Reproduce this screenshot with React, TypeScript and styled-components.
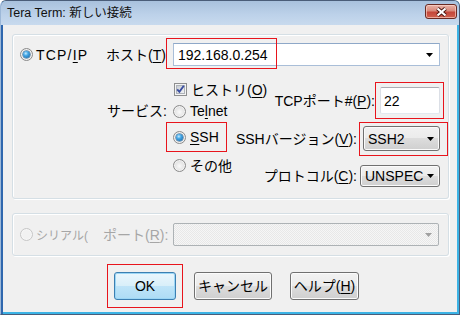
import React from "react";
import styled, { createGlobalStyle, css } from "styled-components";

const GlobalStyle = createGlobalStyle`
  html, body {
    margin: 0;
    padding: 0;
    background: #fff;
  }
  body {
    font-family: "Liberation Sans", "Noto Sans CJK JP", sans-serif;
    font-size: 14px;
    color: #000;
  }
  * {
    box-sizing: border-box;
  }
`;

const Window = styled.div`
  width: 460px;
  height: 315px;
  display: flex;
  flex-direction: column;
  border: 1px solid #4a5d79;
  border-left-color: #9db8d8;
  border-radius: 6px 6px 0 0;
  background: linear-gradient(90deg, #2f67ae 0, #2f67ae 2px, #3cb3e5 2px);
  overflow: hidden;
`;

const TitleBar = styled.div`
  height: 24px;
  flex: none;
  display: flex;
  align-items: flex-start;
  padding: 0 2px 0 6px;
  background: linear-gradient(#a8c1dd, #bcd1e9 55%, #c8daee);
`;

const Title = styled.div`
  flex: 1;
  font-size: 12.5px;
  line-height: 24px;
  color: #111;
  white-space: nowrap;
`;

const CloseButton = styled.div`
  width: 32px;
  height: 15px;
  margin-top: 3px;
  border: 1px solid #6a2a22;
  border-radius: 3px;
  display: flex;
  align-items: center;
  justify-content: center;
  background: linear-gradient(#e9b2a7 0%, #d98a7b 45%, #c4473a 55%, #d0614f 100%);
  box-shadow: inset 0 0 0 1px rgba(255, 220, 210, 0.6);
`;

const Client = styled.div`
  flex: 1;
  margin: 0 2px 2px 2px;
  background: #f0f0f0;
  padding: 9px 8px 0 9px;
  display: flex;
  flex-direction: column;
`;

const GroupBox = styled.div<{ $height: number; $gap?: number }>`
  height: ${(p) => p.$height}px;
  margin-top: ${(p) => p.$gap ?? 0}px;
  border: 1px solid #d5dfe5;
  border-radius: 3px;
  box-shadow: inset 1px 1px 0 #fff, 1px 1px 0 #fff;
`;

const TcpGroup = styled(GroupBox)`
  padding: 8px 8px 0 7px;
  display: flex;
  flex-direction: column;
`;

const SerialGroup = styled(GroupBox)`
  padding: 0 9px 0 7px;
  display: flex;
  align-items: center;
`;

const TopRow = styled.div`
  height: 23px;
  display: flex;
  align-items: center;
`;

const Body = styled.div`
  flex: 1;
  display: flex;
`;

const ServiceCol = styled.div`
  flex: none;
  width: 153px;
  padding-top: 34px;
`;

const OptionsCol = styled.div`
  flex: none;
  width: 70px;
  padding-top: 12px;
  display: flex;
  flex-direction: column;
`;

const RightCol = styled.div`
  flex: 1;
  min-width: 0;
  padding-top: 21px;
  display: flex;
  flex-direction: column;
  align-items: flex-end;
`;

const RightRow = styled.div<{ $height: number; $gap?: number }>`
  flex: none;
  height: ${(p) => p.$height}px;
  margin-top: ${(p) => p.$gap ?? 0}px;
  display: flex;
  align-items: center;
`;

const Option = styled.div<{ $gap?: number }>`
  height: 22px;
  margin-top: ${(p) => p.$gap ?? 0}px;
  display: flex;
  align-items: center;
  gap: 4px;
  white-space: nowrap;
`;

const Label = styled.span<{ $width?: number; $gap?: number; $off?: boolean; $align?: string }>`
  display: flex;
  align-items: center;
  justify-content: ${(p) => p.$align ?? "flex-start"};
  flex: none;
  height: 22px;
  line-height: 16px;
  white-space: nowrap;
  width: ${(p) => (p.$width ? `${p.$width}px` : "auto")};
  margin-right: ${(p) => p.$gap ?? 0}px;
  color: ${(p) => (p.$off ? "#a6a6a6" : "#000")};
`;

const ServiceLabel = styled(Label)`
  padding-right: 6px;
`;

const PortLabel = styled(Label)`
  margin-left: 15px;
`;

const Key = styled.span`
  text-decoration: underline;
  text-underline-offset: 2px;
`;

const RadioItem = styled.div<{ $width: number; $clip?: boolean; $off?: boolean }>`
  flex: none;
  width: ${(p) => p.$width}px;
  height: 22px;
  display: flex;
  align-items: center;
  gap: 3px;
  white-space: nowrap;
  overflow: ${(p) => (p.$clip ? "hidden" : "visible")};
  color: ${(p) => (p.$off ? "#a6a6a6" : "#000")};
`;

const WideText = styled.span`
  letter-spacing: 1.2px;
`;

const SmallText = styled.span`
  font-size: 12px;
`;

const RadioDot = styled.span<{ $on?: boolean; $off?: boolean }>`
  position: relative;
  flex: none;
  width: 13px;
  height: 13px;
  border-radius: 50%;
  border: 1px solid ${(p) => (p.$off ? "#c6c6c6" : "#8b8b8b")};
  background: ${(p) =>
    p.$off
      ? "#f1f1f1"
      : "radial-gradient(circle at 50% 55%, #fafafa 0, #e4e4e4 55%, #c9c9c9 100%)"};
  box-shadow: inset 0 0 0 1px ${(p) => (p.$off ? "#f6f6f6" : "#f3f3f3")};
  ${(p) =>
    p.$on &&
    css`
      &::after {
        content: "";
        position: absolute;
        left: 2px;
        top: 2px;
        width: 7px;
        height: 7px;
        border-radius: 50%;
        background: radial-gradient(circle at 40% 35%, #c8ecff 0, #46a8e6 35%, #0f5d9e 100%);
        box-shadow: 0 0 0 0.5px #2a5d88;
      }
    `}
`;

const HostCombo = styled.div`
  flex: 1;
  height: 23px;
  background: #fff;
  border: 1px solid #a9bed8;
  border-top-color: #8ea8c8;
  display: flex;
  align-items: center;
  padding: 0 6px 0 4px;
`;

const ComboText = styled.span`
  flex: 1;
  overflow: hidden;
  white-space: nowrap;
  line-height: 16px;
`;

const PortInput = styled.div`
  width: 60px;
  height: 27px;
  background: #fff;
  border: 1px solid #dbdfe6;
  border-top-color: #abadb3;
  border-bottom-color: #e3e9ef;
  border-radius: 2px;
  display: flex;
  align-items: center;
  padding-left: 3px;
`;

const ListCombo = styled.div<{ $width: number; $height: number }>`
  width: ${(p) => p.$width}px;
  height: ${(p) => p.$height}px;
  border: 1px solid #707070;
  border-radius: 3px;
  background: linear-gradient(#f2f2f2 0%, #ebebeb 50%, #dddddd 50%, #cfcfcf 100%);
  box-shadow: inset 0 0 0 1px #fbfbfb;
  display: flex;
  align-items: center;
  padding: 0 5px 0 4px;
  overflow: hidden;
`;

const DisabledCombo = styled.div`
  flex: 1;
  height: 23px;
  border: 1px solid #adb2b5;
  border-radius: 2px;
  background: repeating-conic-gradient(#f6f6f6 0 25%, #e8e8e8 0 50%) 0 0 / 2px 2px;
  display: flex;
  align-items: center;
  justify-content: flex-end;
  padding-right: 6px;
`;

const Marked = styled.div<{ $l: number; $t: number; $w?: number; $r?: number; $b: number }>`
  position: relative;
  display: flex;
  &::after {
    content: "";
    position: absolute;
    left: ${(p) => p.$l}px;
    top: ${(p) => p.$t}px;
    bottom: ${(p) => p.$b}px;
    ${(p) => (p.$w ? `width: ${p.$w}px;` : `right: ${p.$r}px;`)}
    border: 1px solid #e8141c;
    pointer-events: none;
  }
`;

const HostMarked = styled(Marked)`
  flex: 1;
`;

const ButtonRow = styled.div`
  margin-top: 16px;
  padding-left: 102px;
  display: flex;
  gap: 18px;
`;

const Button = styled.div<{ $width: number; $primary?: boolean }>`
  width: ${(p) => p.$width}px;
  height: 28px;
  border-radius: 3px;
  display: flex;
  align-items: center;
  justify-content: center;
  white-space: nowrap;
  line-height: 16px;
  border: 1px solid ${(p) => (p.$primary ? "#3c7fb1" : "#707070")};
  background: ${(p) =>
    p.$primary
      ? "linear-gradient(#ebf6fd 0%, #d8eff9 50%, #bfe4f8 50%, #addcf5 100%)"
      : "linear-gradient(#f2f2f2 0%, #ebebeb 50%, #dddddd 50%, #cfcfcf 100%)"};
  box-shadow: inset 0 0 0 1px ${(p) => (p.$primary ? "#9cd6f5" : "#fbfbfb")};
`;

const Arrow = ({ color = "#000" }: { color?: string }) => (
  <svg width="7" height="4" viewBox="0 0 7 4" style={{ flex: "none" }}>
    <path d="M0 0H7L3.5 4Z" fill={color} />
  </svg>
);

const CheckBox = () => (
  <svg width="13" height="13" viewBox="0 0 13 13" style={{ flex: "none", marginLeft: 1 }}>
    <defs>
      <linearGradient id="cb" x1="0" y1="0" x2="1" y2="1">
        <stop offset="0" stopColor="#c6cbd2" />
        <stop offset="1" stopColor="#f4f5f6" />
      </linearGradient>
    </defs>
    <rect x="0.5" y="0.5" width="12" height="12" fill="#f4f4f4" stroke="#8e8f8f" />
    <rect x="2.5" y="2.5" width="8" height="8" fill="url(#cb)" stroke="#aeb3b9" />
    <path d="M3.2 6.4 L5.4 8.8 L9.8 2.8" fill="none" stroke="#3b4ea0" strokeWidth="1.9" />
  </svg>
);

const CloseX = () => (
  <svg width="13" height="10" viewBox="0 0 13 10">
    <path d="M2.5 1.5 L10.5 8.5 M10.5 1.5 L2.5 8.5" stroke="#4a1610" strokeWidth="4" />
    <path d="M2.5 1.5 L10.5 8.5 M10.5 1.5 L2.5 8.5" stroke="#fff" strokeWidth="2.2" />
  </svg>
);

export default function App() {
  return (
    <>
      <GlobalStyle />
      <Window>
        <TitleBar>
          <Title>Tera Term: 新しい接続</Title>
          <CloseButton>
            <CloseX />
          </CloseButton>
        </TitleBar>
        <Client>
          <TcpGroup $height={165}>
            <TopRow>
              <RadioItem $width={86}>
                <RadioDot $on />
                <WideText>
                  TCP/<Key>I</Key>P
                </WideText>
              </RadioItem>
              <Label $width={67}>
                ホスト(<Key>T</Key>)
              </Label>
              <HostMarked $l={-7} $t={-5} $w={109} $b={-3}>
                <HostCombo>
                  <ComboText>192.168.0.254</ComboText>
                  <Arrow />
                </HostCombo>
              </HostMarked>
            </TopRow>
            <Body>
              <ServiceCol>
                <ServiceLabel $align="flex-end">サービス:</ServiceLabel>
              </ServiceCol>
              <OptionsCol>
                <Option>
                  <CheckBox />
                  <span>
                    ヒストリ(<Key>O</Key>)
                  </span>
                </Option>
                <Option>
                  <RadioDot />
                  <span>
                    Te<Key>l</Key>net
                  </span>
                </Option>
                <Marked $l={-7} $t={0} $w={59} $b={-4}>
                  <Option $gap={4}>
                    <RadioDot $on />
                    <span>
                      <Key>S</Key>SH
                    </span>
                  </Option>
                </Marked>
                <Option $gap={6}>
                  <RadioDot />
                  <span>その他</span>
                </Option>
              </OptionsCol>
              <RightCol>
                <RightRow $height={27}>
                  <Label $gap={5}>
                    TCPポート#(<Key>P</Key>):
                  </Label>
                  <Marked $l={-5} $t={-5} $r={-4} $b={-5}>
                    <PortInput>22</PortInput>
                  </Marked>
                </RightRow>
                <RightRow $height={25} $gap={12}>
                  <Label $gap={6}>
                    SSHバージョン(<Key>V</Key>):
                  </Label>
                  <Marked $l={-4} $t={-4} $r={-8} $b={-5}>
                    <ListCombo $width={77} $height={25}>
                      <ComboText>SSH2</ComboText>
                      <Arrow />
                    </ListCombo>
                  </Marked>
                </RightRow>
                <RightRow $height={22} $gap={14}>
                  <Label $gap={3}>
                    プロトコル(<Key>C</Key>):
                  </Label>
                  <ListCombo $width={80} $height={22}>
                    <ComboText>UNSPEC</ComboText>
                    <Arrow />
                  </ListCombo>
                </RightRow>
              </RightCol>
            </Body>
          </TcpGroup>
          <SerialGroup $height={43} $gap={14}>
            <RadioItem $width={68} $clip $off>
              <RadioDot $off />
              <SmallText>シリアル(E)</SmallText>
            </RadioItem>
            <PortLabel $width={70} $off>
              ポート(<Key>R</Key>):
            </PortLabel>
            <DisabledCombo>
              <Arrow color="#a0a0a0" />
            </DisabledCombo>
          </SerialGroup>
          <ButtonRow>
            <Marked $l={-7} $t={-8} $r={-7} $b={-8}>
              <Button $width={62} $primary>
                OK
              </Button>
            </Marked>
            <Button $width={78}>キャンセル</Button>
            <Button $width={69}>
              ヘルプ(<Key>H</Key>)
            </Button>
          </ButtonRow>
        </Client>
      </Window>
    </>
  );
}
